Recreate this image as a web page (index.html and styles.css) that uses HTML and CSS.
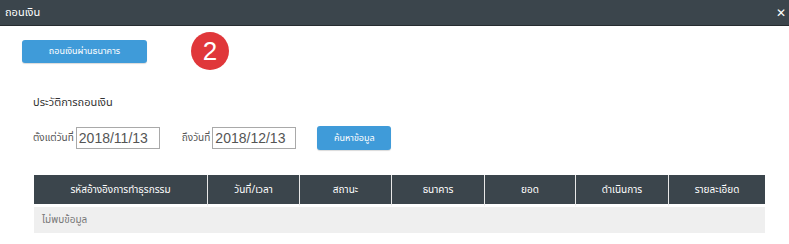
FILE: index.html
```html
<!DOCTYPE html>
<html lang="th">
<head>
    <meta charset="UTF-8">
    <title>ถอนเงิน</title>
    <link rel="stylesheet" href="styles.css">
</head>
<body>

<div class="topbar">
    <span class="topbar-title">ถอนเงิน</span>
    <span class="close-btn">&#10005;</span>
</div>

<div class="content">
    <div class="action-row">
        <button class="btn btn-bank">ถอนเงินผ่านธนาคาร</button>
        <span class="badge">2</span>
    </div>

    <h3 class="section-title">ประวัติการถอนเงิน</h3>

    <div class="filter-row">
        <label class="filter-label">ตั้งแต่วันที่</label>
        <input class="date-input" type="text" value="2018/11/13">
        <label class="filter-label label-to">ถึงวันที่</label>
        <input class="date-input" type="text" value="2018/12/13">
        <button class="btn btn-search">ค้นหาข้อมูล</button>
    </div>

    <table class="history-table">
        <colgroup>
            <col class="w-ref">
            <col class="w-92">
            <col class="w-92">
            <col class="w-93">
            <col class="w-91">
            <col class="w-93">
            <col>
        </colgroup>
        <thead>
            <tr>
                <th>รหัสอ้างอิงการทำธุรกรรม</th>
                <th>วันที่/เวลา</th>
                <th>สถานะ</th>
                <th>ธนาคาร</th>
                <th>ยอด</th>
                <th>ดำเนินการ</th>
                <th>รายละเอียด</th>
            </tr>
        </thead>
        <tbody>
            <tr>
                <td colspan="7">ไม่พบข้อมูล</td>
            </tr>
        </tbody>
    </table>
</div>

</body>
</html>
```

FILE: styles.css
```css
body {
    margin: 0;
    font-family: "Noto Sans Thai", "Noto Sans", "DejaVu Sans", sans-serif;
    background-color: #fff;
    color: #333;
}
.topbar {
    height: 25px;
    background-color: #3b454c;
    border-bottom: 1px solid #262c30;
    display: flex;
    align-items: center;
    justify-content: space-between;
    padding: 0 3px 0 5px;
}
.topbar-title {
    color: #fff;
    font-size: 11px;
}
.close-btn {
    color: #fff;
    font-size: 12px;
    font-weight: bold;
}
.content {
    padding: 6px 24px 0 22px;
}
.action-row {
    display: flex;
    align-items: center;
    gap: 44px;
}
.btn {
    background-color: #3f9bd9;
    color: #fff;
    border: none;
    border-radius: 3px;
    font-family: inherit;
    font-size: 9px;
    padding: 0;
    box-shadow: 0 1px 1px rgba(0, 0, 0, 0.15);
}
.btn-bank {
    width: 125px;
    height: 23px;
}
.badge {
    width: 38px;
    height: 38px;
    border-radius: 50%;
    background-color: #e0373a;
    color: #fff;
    font-family: "Liberation Sans", sans-serif;
    font-size: 26px;
    display: flex;
    align-items: center;
    justify-content: center;
}
.section-title {
    font-weight: normal;
    font-size: 11px;
    margin: 24px 0 0 11px;
}
.filter-row {
    display: flex;
    align-items: center;
    margin: 15px 0 0 11px;
}
.filter-label {
    font-size: 10px;
    color: #555;
    margin-right: 2px;
}
.label-to {
    margin-left: 22px;
}
.date-input {
    width: 80px;
    height: 20px;
    border: 1px solid #a9a9a9;
    padding: 0 0 0 2px;
    font-family: "Liberation Sans", sans-serif;
    font-size: 14px;
    color: #555;
}
.btn-search {
    width: 74px;
    height: 24px;
    margin-left: 21px;
}
.history-table {
    width: 731px;
    margin: 25px 0 0 12px;
    border-collapse: separate;
    border-spacing: 0;
    table-layout: fixed;
}
.w-ref { width: 173px; }
.w-92 { width: 92px; }
.w-93 { width: 93px; }
.w-91 { width: 91px; }
.history-table th {
    background-color: #3b454c;
    color: #fff;
    font-weight: normal;
    font-size: 10px;
    height: 29px;
    padding: 0;
    border-left: 1px solid #e8e8e8;
    border-bottom: 3px solid #fff;
}
.history-table th:first-child {
    border-left: none;
}
.history-table td {
    background-color: #efefef;
    color: #777;
    font-size: 10px;
    height: 26px;
    padding: 0 8px;
}
```
